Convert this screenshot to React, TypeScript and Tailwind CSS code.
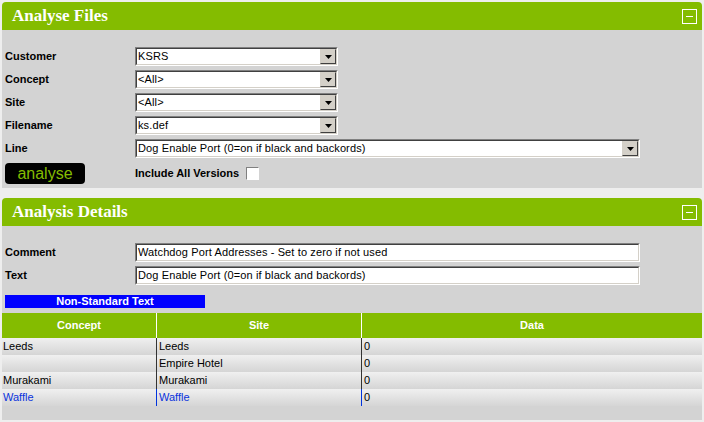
import React from "react"

const green = "bg-[#84bc00]"

function MinusBox() {
  return (
    <div className="flex h-[15px] w-[15px] items-center justify-center border border-white">
      <div className="h-[1px] w-[7px] bg-white" />
    </div>
  )
}

function Panel({ title, children }: { title: string; children: React.ReactNode }) {
  return (
    <div className="w-[700px]">
      <div className={`flex h-[28px] items-center justify-between rounded-t-[4px] ${green} pl-[10px] pr-[5px]`}>
        <h2 className="font-['Liberation_Serif',serif] text-[17px] font-bold text-white">{title}</h2>
        <MinusBox />
      </div>
      <div className="bg-[#d3d3d3]">{children}</div>
    </div>
  )
}

// classic sunken win2k style box
function Sunken({ width, children }: { width: string; children: React.ReactNode }) {
  return (
    <div className={`flex h-[19px] ${width} border border-t-[#808080] border-l-[#808080] border-b-white border-r-white`}>
      <div className="flex flex-1 border border-t-[#404040] border-l-[#404040] border-b-[#d4d0c8] border-r-[#d4d0c8] bg-white">
        {children}
      </div>
    </div>
  )
}

function Select({ value, width = "w-[203px]" }: { value: string; width?: string }) {
  return (
    <Sunken width={width}>
      <span className="flex-1 truncate pl-[1px] text-[11px] leading-[15px] tracking-[0.12px] text-black">{value}</span>
      <div className="flex h-[15px] w-[16px] items-center justify-center border border-t-[#d4d0c8] border-l-[#d4d0c8] border-b-[#404040] border-r-[#404040] bg-[#d4d0c8]">
        <svg width="7" height="4" viewBox="0 0 7 4">
          <polygon points="0,0 7,0 3.5,4" fill="#000" />
        </svg>
      </div>
    </Sunken>
  )
}

function TextBox({ value }: { value: string }) {
  return (
    <Sunken width="w-[505px]">
      <span className="flex-1 truncate pl-[1px] text-[11px] leading-[15px] tracking-[0.12px] text-black">{value}</span>
    </Sunken>
  )
}

function Row({ label, children }: { label: string; children: React.ReactNode }) {
  return (
    <div className="flex h-[19px] items-center">
      <label className="w-[130px] text-[11px] font-bold text-black">{label}</label>
      {children}
    </div>
  )
}

const rows = [
  { concept: "Leeds", site: "Leeds", data: "0" },
  { concept: "", site: "Empire Hotel", data: "0" },
  { concept: "Murakami", site: "Murakami", data: "0" },
  { concept: "Waffle", site: "Waffle", data: "0", flagged: true },
]

export default function App() {
  return (
    <div className="min-h-[422px] bg-[#eeeeee] pl-[2px] pt-[2px] font-['Liberation_Sans',Arial,sans-serif]">
      <Panel title="Analyse Files">
        <div className="flex flex-col gap-[4px] px-[3px] pt-[17px]">
          <Row label="Customer">
            <Select value="KSRS" />
          </Row>
          <Row label="Concept">
            <Select value="<All>" />
          </Row>
          <Row label="Site">
            <Select value="<All>" />
          </Row>
          <Row label="Filename">
            <Select value="ks.def" />
          </Row>
          <Row label="Line">
            <Select value="Dog Enable Port (0=on if black and backords)" width="w-[505px]" />
          </Row>
        </div>
        <div className="mt-[5px] flex items-center px-[3px] pb-[4px]">
          <button className="flex h-[21px] w-[80px] items-center justify-center rounded-[4px] bg-black text-[16px] leading-none text-[#84bc00]">
            analyse
          </button>
          <span className="ml-[50px] text-[11px] font-bold text-black">Include All Versions</span>
          <div className="ml-[7px] h-[13px] w-[13px] border border-t-[#808080] border-l-[#808080] border-b-white border-r-white bg-white" />
        </div>
      </Panel>

      <div className="h-[10px]" />

      <Panel title="Analysis Details">
        <div className="flex flex-col gap-[4px] px-[3px] pt-[17px]">
          <Row label="Comment">
            <TextBox value="Watchdog Port Addresses - Set to zero if not used" />
          </Row>
          <Row label="Text">
            <TextBox value="Dog Enable Port (0=on if black and backords)" />
          </Row>
        </div>
        <div className="ml-[3px] mt-[10px] flex h-[13px] w-[200px] items-center justify-center bg-[#0000ff] text-[11px] font-bold text-white">
          Non-Standard Text
        </div>

        <div className="mt-[5px] pb-[14px] text-[11px]">
          <div className={`flex h-[25px] items-center ${green} font-bold text-white`}>
            <div className="w-[155px] border-r border-white text-center leading-[25px]">Concept</div>
            <div className="w-[205px] border-r border-white text-center leading-[25px]">Site</div>
            <div className="flex-1 text-center">Data</div>
          </div>
          {rows.map((r, i) => {
            const line = r.flagged ? "border-[#0033dd]" : "border-[#333333]"
            const color = r.flagged ? "text-[#0a33dd]" : "text-black"
            return (
              <div key={i} className={`flex h-[17px] bg-linear-to-b from-[#f0f0f0] to-[#d5d5d5] ${color}`}>
                <div className={`w-[155px] border-r ${line} pl-[1px] leading-[17px]`}>{r.concept}</div>
                <div className={`w-[205px] border-r ${line} pl-[2px] leading-[17px]`}>{r.site}</div>
                <div className="flex-1 pl-[2px] leading-[17px] text-black">{r.data}</div>
              </div>
            )
          })}
        </div>
      </Panel>
    </div>
  )
}
